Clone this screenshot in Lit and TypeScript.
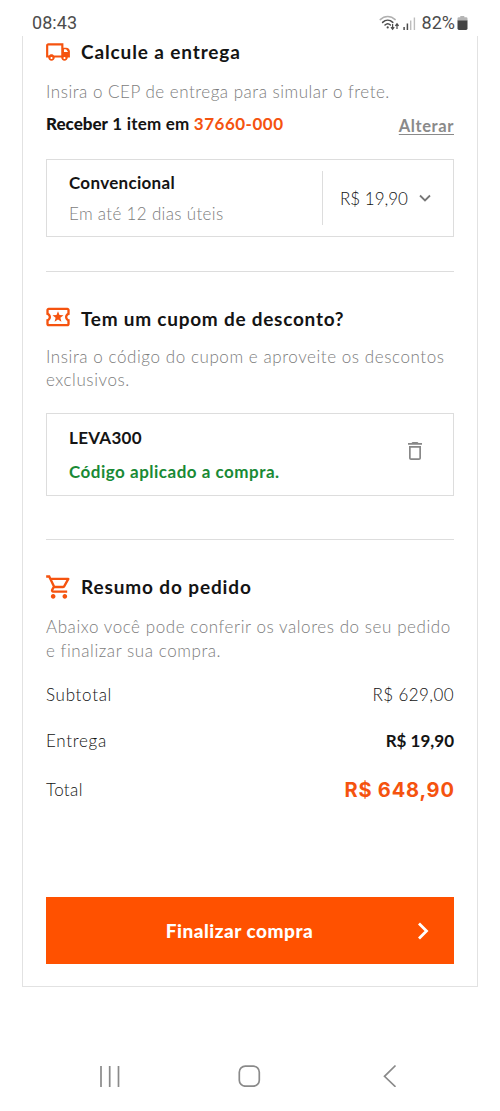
import { LitElement, html, css, svg } from "lit";
import { customElement } from "lit/decorators.js";

const shared = css`
  * { box-sizing: border-box; }
  svg { display: block; flex: none; }
`;

@customElement("status-bar")
class StatusBar extends LitElement {
  static styles = [shared, css`
    :host {
      display: flex; align-items: center; height: 36px; padding: 10px 32px 0 32px;
      font-family: Roboto, sans-serif; font-size: 18px; color: #4c4c4c; line-height: 26px;
    }
    .time { flex: 1; letter-spacing: 0.05px; }
    .battery-text { margin: 0 2px 0 5px; letter-spacing: 0; }
  `];
  render() {
    return html`
      <span class="time">08:43</span>
      <svg width="38" height="18" viewBox="0 0 38 18" fill="none">
        <g stroke-width="1.5" stroke-linecap="round">
          <path d="M1.2 5.6C5.6 1.4 11.8 1.4 16.2 5.6" stroke="#b0b0b0"/>
          <path d="M3.6 8.4c3-2.8 7.2-2.8 10.2 0M6 11c1.6-1.5 3.8-1.5 5.4 0" stroke="#4c4c4c"/>
        </g>
        <circle cx="8.7" cy="13.4" r="1.1" fill="#4c4c4c"/>
        <path d="M13.6 10v5M12 13.200l1.600 2 1.600-2M18 15v-5M16.400 11.800l1.600-2 1.600 2" stroke="#4c4c4c" stroke-width="1.2"/>
        <path d="M25.100 13v3M28.400 9.500V16" stroke="#4c4c4c" stroke-width="1.500"/>
        <path d="M31.700 6.500V16M35.400 3.500V16" stroke="#bdbdbd" stroke-width="1.400"/>
      </svg>
      <span class="battery-text">82%</span>
      <svg width="11" height="16" viewBox="0 0 11 16">
        <path d="M3.3 1h4v1.3H9.2a1.3 1.3 0 0 1 1.3 1.3V6H.5V3.6A1.3 1.3 0 0 1 1.8 2.3H3.3z" fill="#b5b5b5"/>
        <path d="M.5 5.4h10v8.2A1.4 1.4 0 0 1 9.1 15H1.9A1.4 1.4 0 0 1 .5 13.6z" fill="#444"/>
      </svg>
    `;
  }
}

@customElement("section-heading")
class SectionHeading extends LitElement {
  static properties = { icon: {}, label: {} };
  icon!: string;
  label!: string;
  static icons: Record<string, unknown> = {
    truck: svg`<path d="M19.500 8H17V4H3c-1.100 0-2 .9-2 2v11h2c0 1.660 1.340 3 3 3s3-1.340 3-3h6c0 1.660 1.340 3 3 3s3-1.340 3-3h2v-5.500C23 9.500 21.500 8 19.500 8zM6 18.500c-.55 0-1-.45-1-1s.45-1 1-1 1 .45 1 1-.45 1-1 1zM15 15.200H8.300C7.700 14.500 6.900 14 6 14s-1.700.5-2.300 1.200H3V6h12v9.200zM18 18.500c-.55 0-1-.45-1-1s.45-1 1-1 1 .45 1 1-.45 1-1 1zM17.500 12V9.500h2L21.300 12H17.500z"/>`,
    ticket: svg`<path d="M20 12c0-1.100.9-2 2-2V6c0-1.100-.9-2-2-2H4c-1.100 0-1.990.9-1.990 2v4c1.100 0 1.990.9 1.990 2s-.89 2-2 2v4c0 1.100.9 2 2 2h16c1.100 0 2-.9 2-2v-4c-1.100 0-2-.9-2-2zm0-3.460c-1.190.69-2 1.990-2 3.460s.81 2.770 2 3.460V18H4v-2.540c1.190-.69 2-1.990 2-3.460 0-1.480-.8-2.770-1.990-3.460L4 6h16v2.540zM9.070 16L12 14.120 14.930 16l-.89-3.360 2.690-2.200-3.470-.21L12 7l-1.270 3.220-3.470.21 2.690 2.200z"/>`,
    cart: svg`<path d="M15.550 13c.75 0 1.410-.41 1.750-1.030l3.580-6.490c.37-.66-.11-1.480-.87-1.480H5.210l-.94-2H1v2h2l3.600 7.590-1.350 2.440C4.520 15.370 5.480 17 7 17h12v-2H7l1.100-2h7.450zM6.160 6h12.150l-2.760 5H8.530L6.160 6zM7 18c-1.100 0-1.990.9-1.990 2S5.900 22 7 22s2-.9 2-2-.9-2-2-2zm10 0c-1.100 0-1.990.9-1.990 2s.89 2 1.990 2 2-.9 2-2-.9-2-2-2z"/>`,
  };
  static styles = [shared, css`
    :host { display: flex; align-items: center; height: 28px; flex: none; }
    .icon { width: 28px; height: 28px; margin: 0 9px 0 -2px; fill: #f5530f; overflow: visible; }
    .truck { width: 26px; height: 26px; margin: 0 10px 0 -1px; }
    .ticket { height: 28px; width: 28px; margin: -2px 9px 0 -2px; }
    .cart { width: 28px; height: 28px; margin: -1px 8px 0 -1px; }
    .label { margin: 0; font: 700 19px/28px Lato, sans-serif; letter-spacing: 0.87px; color: #141414; white-space: nowrap; }
    .ticket + .label { padding-top: 1px; letter-spacing: 0.75px; }
  `];
  render() {
    return html`
      <svg class="icon ${this.icon}" viewBox="0 0 24 24" fill-rule="evenodd">${SectionHeading.icons[this.icon]}</svg>
      <h2 class="label">${this.label}</h2>
    `;
  }
}

@customElement("nav-bar")
class NavBar extends LitElement {
  static styles = [shared, css`
    :host { display: flex; justify-content: space-between; padding: 0 100px 0 98px; height: 24px; margin-top: 76px; }
  `];
  render() {
    return html`
      <svg width="24" height="24" fill="none" stroke="#8a8a8a" stroke-width="1.700"><path d="M3 3v21M11.700 3v21M20.500 3v21"/></svg>
      <svg width="24" height="24" fill="none" stroke="#8a8a8a" stroke-width="1.700"><rect x="2.300" y="3.200" width="20" height="20" rx="6"/></svg>
      <svg width="24" height="24" fill="none" stroke="#8a8a8a" stroke-width="1.700"><path d="M19.500 2.500 8.500 13.300l11 10.500"/></svg>
    `;
  }
}

@customElement("app-root")
class AppRoot extends LitElement {
  static styles = [shared, css`
    :host { display: block; height: 1111px; background: #fff; overflow: hidden; font-family: Lato, sans-serif; font-size: 17px; color: #141414; }
    .card { margin: 0 22px; height: 951px; padding: 2px 23px 0; border: 1px solid #e2e2e2; border-top: 0; display: flex; flex-direction: column; }
    p { margin: 0; }
    .hint { color: #7c7c7c; font-weight: 300; font-size: 17px; line-height: 23px; letter-spacing: 0.57px; white-space: nowrap; }
    .h1 { margin-top: 14px; letter-spacing: 0.51px; }
    .h2 { margin-top: 13px; }
    .h3 { margin-top: 14px; line-height: 23.500px; }
    .row { display: flex; justify-content: space-between; align-items: center; line-height: 24px; flex: none; }
    .sub { margin-top: 21px; height: 24px; }
    .del { margin-top: 22px; height: 24px; }
    .tot { margin-top: 25px; height: 24px; }
    .bold { font-weight: 700; font-size: 17px; letter-spacing: 0.3px; white-space: nowrap; }
    .del .bold { letter-spacing: 0; }
    .accent { color: #f5530f; letter-spacing: 0.5px; }
    .strong { font-weight: 900; letter-spacing: 0; }
    .receive { margin-top: 7px; }
    .receive .bold { letter-spacing: 0.2px; }
    .receive .accent { letter-spacing: 0.5px; }
    .change { color: #8a8a8a; font-weight: 700; font-size: 16.500px; letter-spacing: 0.6px; text-decoration: underline; text-underline-offset: 2px; padding-top: 4px; }
    .box { display: flex; border: 1px solid #ddd; padding: 11px 22px; flex: none; }
    .ship { height: 78px; margin-top: 21px; }
    .stack { flex: 1; }
    .stack p { line-height: 24px; }
    .ship .hint { margin-top: 7px; line-height: 24px; letter-spacing: 0.33px; }
    .price { display: flex; align-items: center; width: 109px; border-left: 1px solid #ddd; padding-left: 17px; }
    .light { font-weight: 300; color: #111; letter-spacing: 0.4px; white-space: nowrap; }
    .light:first-child { letter-spacing: 0.7px; }
    .tot .light:first-child { letter-spacing: 0.4px; }
    .price .light:first-child { flex: 1; letter-spacing: 0; }
    .rule { height: 1px; background: #ddd; flex: none; }
    .r1 { margin: 34px 0 32px; }
    .r2 { margin: 43px 0 33px; }
    .coupon { height: 83px; margin-top: 22px; align-items: center; padding-right: 26px; }
    .trash { margin-bottom: 8px; }
    .stack .ok { color: #198a35; margin-top: 10px; letter-spacing: 0.5px; }
    .final { color: #f5530f; font: 700 20px/24px Inter, sans-serif; letter-spacing: 0.8px; margin-right: -0.700px; }
    .buy { display: grid; grid-template-columns: 1fr auto 1fr; align-items: center; flex: none; height: 67px; margin-top: 95px; border: 0; padding: 0 24px 0 3px; background: #ff5100; color: #fff; font: 900 19px Lato, sans-serif; letter-spacing: 0.5px; }
    .label { grid-column: 2; white-space: nowrap; }
    .arrow { justify-self: end; }
  `];
  render() {
    return html`
      <status-bar></status-bar>
      <main class="card">
        <section-heading icon="truck" label="Calcule a entrega"></section-heading>
        <p class="hint h1">Insira o CEP de entrega para simular o frete.</p>
        <div class="row receive">
          <span class="bold"><span class="strong">Receber</span> 1 item em <span class="accent">37660-000</span></span>
          <span class="change">Alterar</span>
        </div>
        <div class="box ship">
          <div class="stack"><p class="bold">Convencional</p><p class="hint">Em até 12 dias úteis</p></div>
          <div class="price">
            <span class="light">R$ 19,90</span>
            <svg width="12" height="8" fill="none" stroke="#777" stroke-width="1.800"><path d="M1 1.500 6 6.400l5-4.900"/></svg>
          </div>
        </div>
        <div class="rule r1"></div>
        <section-heading icon="ticket" label="Tem um cupom de desconto?"></section-heading>
        <p class="hint h2">Insira o código do cupom e aproveite os descontos<br>exclusivos.</p>
        <div class="box coupon">
          <div class="stack"><p class="bold">LEVA300</p><p class="bold ok">Código aplicado a compra.</p></div>
          <svg class="trash" width="24" height="24" viewBox="0 0 24 24" fill="#888"><path fill-rule="evenodd" d="M6 19c0 1.100.9 2 2 2h8c1.100 0 2-.9 2-2V7H6v12zM7.700 8.700h8.600v10.600H7.700zM15.500 4l-1-1h-5l-1 1H5v1.800h14V4z"/></svg>
        </div>
        <div class="rule r2"></div>
        <section-heading icon="cart" label="Resumo do pedido"></section-heading>
        <p class="hint h3">Abaixo você pode conferir os valores do seu pedido<br>e finalizar sua compra.</p>
        <div class="row sub"><span class="light">Subtotal</span><span class="light">R$ 629,00</span></div>
        <div class="row del"><span class="light">Entrega</span><span class="bold">R$ 19,90</span></div>
        <div class="row tot"><span class="light">Total</span><span class="final">R$ 648,90</span></div>
        <button class="buy">
          <span class="label">Finalizar compra</span>
          <svg class="arrow" width="14" height="18" fill="none" stroke="#fff" stroke-width="2.800"><path d="m3 1.500 7.500 7.500L3 16.500"/></svg>
        </button>
      </main>
      <nav-bar></nav-bar>
    `;
  }
}
